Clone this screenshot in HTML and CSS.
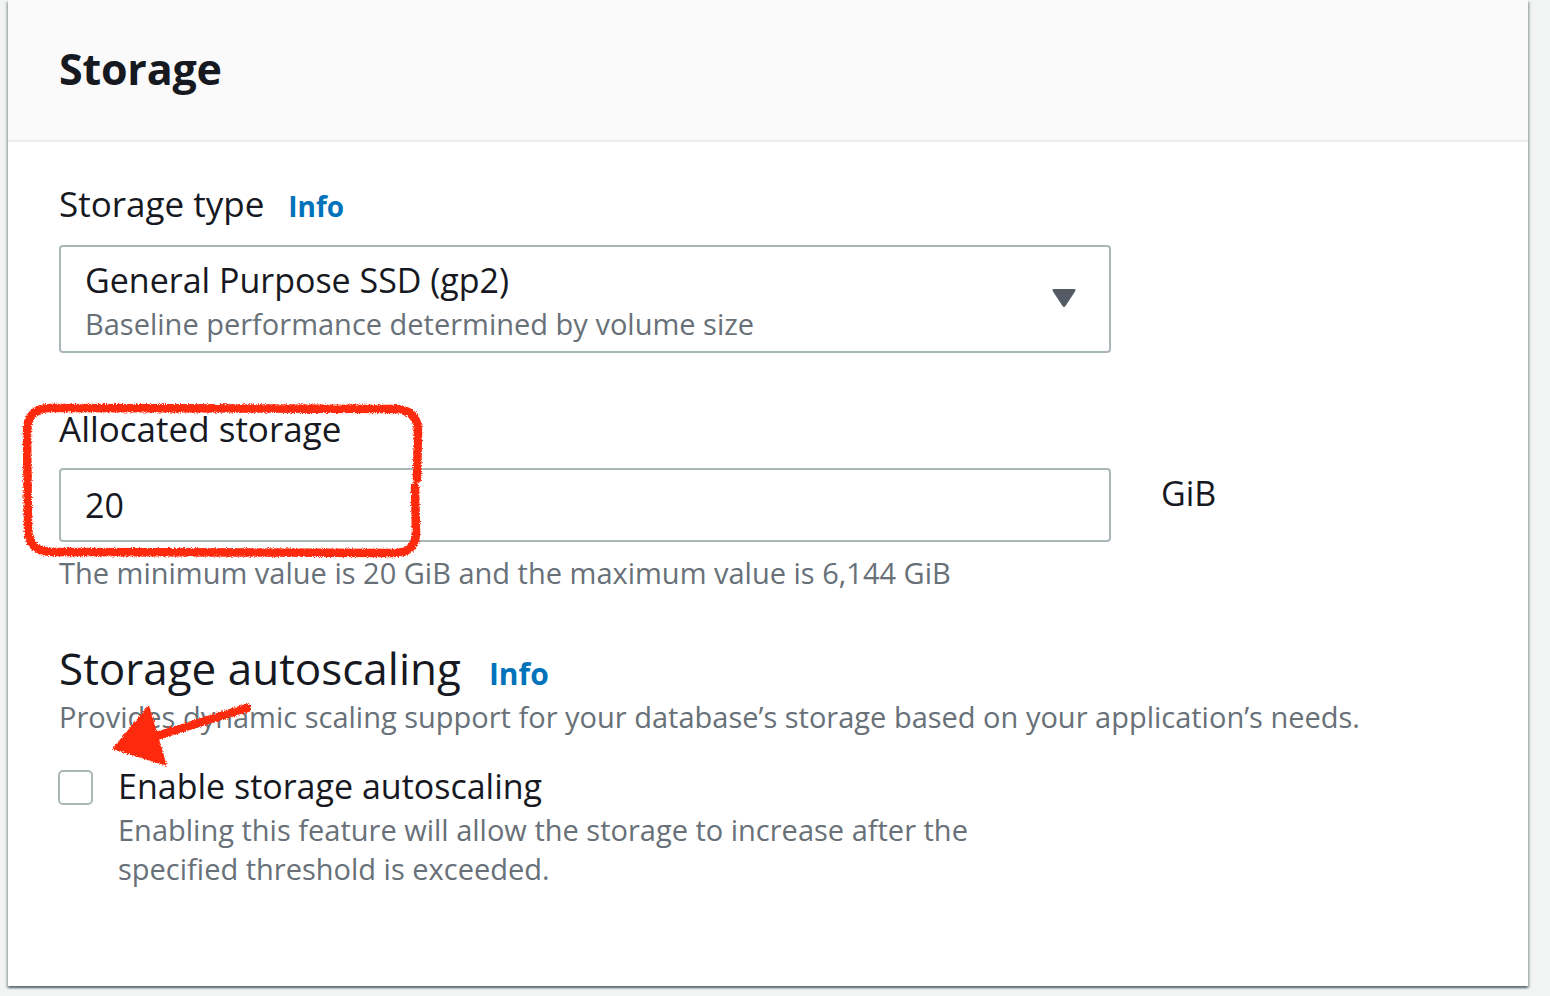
FILE: index.html
```html
<!DOCTYPE html>
<html lang="en">
<head>
<meta charset="utf-8">
<title>Storage</title>
<link rel="stylesheet" href="styles.css">
</head>
<body>
<div class="page">
  <section class="card">
    <header class="card-header">
      <h2 class="card-title">Storage</h2>
    </header>
    <div class="card-body">
      <div class="field field-type">
        <div class="label-row">
          <span class="label">Storage type</span>
          <a class="info" href="#">Info</a>
        </div>
        <div class="select">
          <div class="select-text">
            <div class="select-value">General Purpose SSD (gp2)</div>
            <div class="select-desc">Baseline performance determined by volume size</div>
          </div>
          <svg class="caret" width="26" height="20" viewBox="0 0 26 20" aria-hidden="true">
            <path d="M3 1 H23 Q25.5 1 24 3.5 L14.5 18 Q13 20 11.5 18 L2 3.5 Q0.5 1 3 1 Z" fill="#545b64"/>
          </svg>
        </div>
      </div>

      <div class="field field-alloc">
        <div class="label-row">
          <span class="label">Allocated storage</span>
        </div>
        <div class="input-row">
          <div class="input">20</div>
          <span class="unit">GiB</span>
        </div>
        <div class="hint">The minimum value is 20 GiB and the maximum value is 6,144 GiB</div>
      </div>

      <div class="autoscale">
        <div class="heading-row">
          <h3 class="sub-title">Storage autoscaling</h3>
          <a class="info info-lg" href="#">Info</a>
        </div>
        <p class="sub-desc">Provides dynamic scaling support for your database’s storage based on your application’s needs.</p>
        <div class="check-row">
          <span class="checkbox"></span>
          <div class="check-text">
            <div class="check-label">Enable storage autoscaling</div>
            <div class="check-desc">Enabling this feature will allow the storage to increase after the<br>specified threshold is exceeded.</div>
          </div>
        </div>
      </div>
    </div>
  </section>

  <svg class="annotations" width="1550" height="996" viewBox="0 0 1550 996" aria-hidden="true">
    <defs>
      <filter id="rough" x="-5%" y="-5%" width="110%" height="110%">
        <feTurbulence type="fractalNoise" baseFrequency="0.9" numOctaves="2" seed="3" result="n"/>
        <feDisplacementMap in="SourceGraphic" in2="n" scale="4" xChannelSelector="R" yChannelSelector="G"/>
      </filter>
    </defs>
    <g filter="url(#rough)" fill="none" stroke="#ff2a0a" stroke-width="8.5" stroke-linecap="round" stroke-linejoin="round">
      <path d="M417 479 L418 432 Q418 410 396 409 L50 408 Q27 408 27 432 L28 528 Q28 552 52 552 L394 553 Q416 553 416 532 L415 487"/>
      <path d="M247 708 L150 738"/>
    </g>
    <g filter="url(#rough)" fill="#ff2a0a">
      <path d="M112 749 L149 705 L167 766 Z"/>
    </g>
  </svg>
</div>
</body>
</html>
```

FILE: styles.css
```css
* {
  box-sizing: border-box;
}

html, body {
  margin: 0;
  padding: 0;
}

body {
  background: #f2f3f3;
  font-family: "Open Sans", "Liberation Sans", sans-serif;
  color: #16191f;
  width: 1550px;
  height: 996px;
  overflow: hidden;
}

.page {
  position: relative;
  width: 1550px;
  height: 996px;
}

.card {
  margin-left: 8px;
  width: 1520px;
  height: 986px;
  background: #ffffff;
  box-shadow: 0 2px 2px 0 rgba(0, 28, 36, 0.45),
              2px 2px 2px 0 rgba(0, 28, 36, 0.18),
              -2px 2px 2px 0 rgba(0, 28, 36, 0.18);
}

.card-header {
  height: 142px;
  background: #fafafa;
  border-bottom: 2px solid #eaeded;
  display: flex;
  align-items: center;
  padding: 0 51px 3px 51px;
}

.card-title {
  margin: 0;
  font-size: 43px;
  font-weight: 700;
  line-height: 52px;
  letter-spacing: -0.2px;
}

.card-body {
  padding: 42px 51px 0 51px;
}

.label-row {
  display: flex;
  align-items: baseline;
  gap: 24px;
  height: 40px;
}

.label {
  font-size: 35px;
  line-height: 40px;
}

.info {
  font-size: 28px;
  line-height: 40px;
  font-weight: 700;
  color: #0073bb;
  text-decoration: none;
}

.select {
  margin-top: 21px;
  width: 1052px;
  height: 108px;
  border: 2px solid #aab7b8;
  border-radius: 4px;
  display: flex;
  align-items: center;
  justify-content: space-between;
  padding: 0 32px 0 24px;
}

.select-text {
  padding-top: 5px;
}

.select-value {
  font-size: 34px;
  line-height: 40px;
}

.select-desc {
  margin-top: 4px;
  font-size: 29px;
  line-height: 40px;
  color: #687078;
}

.caret {
  display: block;
  margin-top: -2px;
}

.field-alloc {
  margin-top: 56px;
}

.input-row {
  margin-top: 19px;
  display: flex;
  align-items: flex-start;
  gap: 52px;
}

.input {
  width: 1052px;
  height: 74px;
  border: 2px solid #aab7b8;
  border-radius: 4px;
  padding: 15px 24px;
  font-size: 34px;
  line-height: 40px;
}

.unit {
  font-size: 34px;
  line-height: 40px;
  padding-top: 5px;
  margin-left: -2px;
}

.hint {
  margin-top: 11px;
  font-size: 29px;
  line-height: 40px;
  color: #687078;
}

.autoscale {
  margin-top: 49px;
}

.heading-row {
  display: flex;
  align-items: baseline;
  gap: 28px;
}

.sub-title {
  margin: 0;
  font-size: 44px;
  font-weight: 400;
  line-height: 52px;
}

.info-lg {
  font-size: 30px;
}

.sub-desc {
  margin: 3px 0 0 0;
  font-size: 29px;
  line-height: 40px;
  color: #687078;
}

.check-row {
  margin-top: 29px;
  display: flex;
  align-items: flex-start;
  gap: 25px;
}

.checkbox {
  flex: none;
  width: 35px;
  height: 35px;
  margin-top: 4px;
  margin-left: -1px;
  border: 2px solid #aab7b8;
  border-radius: 5px;
  background: #ffffff;
}

.check-label {
  font-size: 34px;
  line-height: 40px;
}

.check-desc {
  margin-top: 4px;
  font-size: 29px;
  line-height: 39px;
  color: #687078;
}

.annotations {
  position: absolute;
  left: 0;
  top: 0;
  pointer-events: none;
}
```
